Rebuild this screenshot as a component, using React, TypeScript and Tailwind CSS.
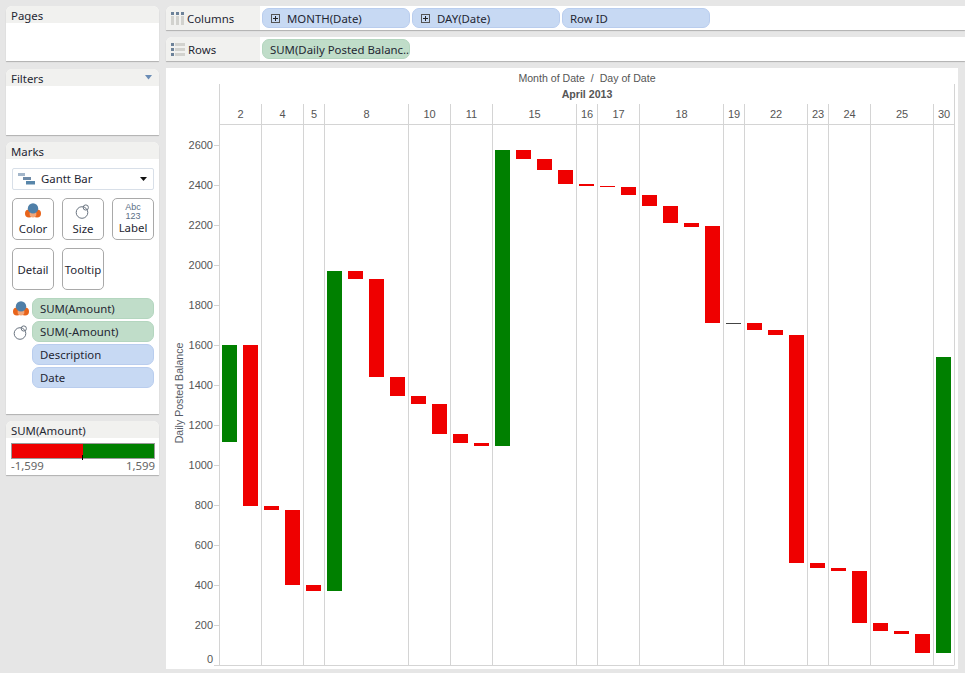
import React from "react";

const days = [
  { label: "2", span: 2 },
  { label: "4", span: 2 },
  { label: "5", span: 1 },
  { label: "8", span: 4 },
  { label: "10", span: 2 },
  { label: "11", span: 2 },
  { label: "15", span: 4 },
  { label: "16", span: 1 },
  { label: "17", span: 2 },
  { label: "18", span: 4 },
  { label: "19", span: 1 },
  { label: "22", span: 3 },
  { label: "23", span: 1 },
  { label: "24", span: 2 },
  { label: "25", span: 3 },
  { label: "30", span: 1 },
];

// top and bottom of each gantt bar, in page pixels
const bars: [number, number, string?][] = [
  [345, 442, "g"], [345, 506], [506, 510], [510, 585], [585, 591],
  [271, 591, "g"], [271, 279], [279, 377], [377, 396], [396, 404],
  [404, 434], [434, 443], [443, 446], [150, 446, "g"], [150, 159],
  [159, 170], [170, 184], [184, 186], [186, 187], [187, 195],
  [195, 206], [206, 223], [223, 227], [226, 323], [323, 324, "d"],
  [323, 330], [330, 335], [335, 563], [563, 568], [568, 571],
  [571, 623], [623, 631], [631, 634], [634, 653], [357, 653, "g"],
];

const ticks = [2600, 2400, 2200, 2000, 1800, 1600, 1400, 1200, 1000, 800, 600, 400, 200];

function ColorIcon({ size = 16 }: { size?: number }) {
  return (
    <svg width={size} height={size} viewBox="0 0 16 16">
      <circle cx="4" cy="10.5" r="4" fill="#e8641b" />
      <circle cx="12" cy="10.5" r="4" fill="#e8641b" />
      <circle cx="8" cy="11" r="3.4" fill="#f2a679" />
      <circle cx="8" cy="5.4" r="5.2" fill="#4f7fa8" />
    </svg>
  );
}

function SizeIcon({ size = 16 }: { size?: number }) {
  return (
    <svg width={size} height={size} viewBox="0 0 16 16" fill="none" stroke="#6a7480" strokeWidth="1">
      <circle cx="7" cy="9.5" r="5.8" />
      <circle cx="10.8" cy="4.5" r="2.6" />
    </svg>
  );
}

function ColumnsIcon() {
  return (
    <svg width="13" height="13" viewBox="0 0 13 13" className="shrink-0">
      {[0, 5, 10].map((x) => (
        <g key={x}>
          <rect x={x} y="0" width="3" height="3" fill="#6d8299" />
          <rect x={x} y="4" width="3" height="9" fill="#d2d2ce" />
        </g>
      ))}
    </svg>
  );
}

function RowsIcon() {
  return (
    <svg width="14" height="13" viewBox="0 0 14 13" className="shrink-0">
      {[0, 5, 10].map((y) => (
        <g key={y}>
          <rect x="0" y={y} width="3" height="3" fill="#6d8299" />
          <rect x="4" y={y} width="10" height="3" fill="#d2d2ce" />
        </g>
      ))}
    </svg>
  );
}

function Pill({ text, green, plus }: { text: string; green?: boolean; plus?: boolean }) {
  return (
    <div
      className={`flex h-5 w-[148px] items-center overflow-hidden whitespace-nowrap rounded-[7px] border ${
        green ? "border-[#b4d6bf] bg-[#c0ddc9]" : "border-[#b9cdee] bg-[#c7d9f3]"
      } ${plus ? "pl-2" : "pl-[7px]"}`}
    >
      {plus && (
        <span className="mr-[7px] flex h-[9px] w-[9px] shrink-0 items-center justify-center border border-[#555] text-[0px]">
          <svg width="7" height="7" viewBox="0 0 7 7">
            <path d="M1 3.5H6M3.5 1V6" stroke="#222" strokeWidth="1" />
          </svg>
        </span>
      )}
      <span className="pt-[2px]">{text}</span>
    </div>
  );
}

function Shelf({ icon, title, children }: { icon: React.ReactNode; title: string; children: React.ReactNode }) {
  return (
    <div className="flex h-6 overflow-hidden rounded-tl-md bg-white shadow-[0_1px_1px_#b0b0b0]">
      <div className="flex w-[94px] shrink-0 items-center gap-[3px] bg-[#f1f1ef] pl-[5px]">
        {icon}
        <span className="pt-[2px]">{title}</span>
      </div>
      <div className="flex items-center gap-[2px] pl-[2px]">{children}</div>
    </div>
  );
}

function Card({ title, height, arrow, children }: { title: string; height: string; arrow?: boolean; children?: React.ReactNode }) {
  return (
    <div className={`${height} overflow-hidden rounded-t-md bg-white shadow-[0_1px_1px_#b0b0b0]`}>
      <div className="flex h-[17px] items-center justify-between bg-[#f1f1ef] pl-[5px] pr-[7px]">
        <span className="pt-[2px]">{title}</span>
        {arrow && (
          <svg width="7" height="5" viewBox="0 0 7 5">
            <path d="M0 0H7L3.5 4.5Z" fill="#6a8cb5" />
          </svg>
        )}
      </div>
      {children}
    </div>
  );
}

function MarkButton({ label, icon }: { label: string; icon?: React.ReactNode }) {
  return (
    <div className="flex h-[42px] w-[42px] flex-col items-center justify-center rounded-[5px] border border-[#a9a9a9] bg-white">
      {icon && <div className="flex h-4 items-center justify-center">{icon}</div>}
      <span className={`leading-[15px] ${icon ? "pt-[2px]" : ""}`}>{label}</span>
    </div>
  );
}

function ShelfField({ icon, text, green }: { icon?: React.ReactNode; text: string; green?: boolean }) {
  return (
    <div className="flex items-center">
      <div className="flex w-5 shrink-0 justify-start pl-[1px]">{icon}</div>
      <div
        className={`flex h-[21px] w-[122px] items-center rounded-[7px] border pl-[7px] ${
          green ? "border-[#b4d6bf] bg-[#c0ddc9]" : "border-[#b9cdee] bg-[#c7d9f3]"
        }`}
      >
        <span>{text}</span>
      </div>
    </div>
  );
}

export default function App() {
  return (
    <div className="flex h-[673px] w-[965px] overflow-hidden bg-[#e6e6e6] pl-[6px] pt-[6px] font-['Noto_Sans',sans-serif] text-[11.4px] leading-none text-[#1f2733]">
      <div className="flex w-[153px] shrink-0 flex-col gap-[7px]">
        <Card title="Pages" height="h-[55px]" />
        <Card title="Filters" height="mt-px h-[66px]" arrow />

        <Card title="Marks" height="h-[272px]">
          <div className="pl-[6px] pr-[5px] pt-[9px]">
            <div className="flex h-[22px] items-center rounded-[2px] border border-[#d8dfe8] pl-[5px] pr-[6px]">
              <svg width="17" height="12" viewBox="0 0 17 12" className="shrink-0">
                <rect x="0" y="0" width="7" height="3" fill="#a3b6ca" />
                <rect x="5" y="4" width="8" height="3" fill="#6f8ba8" />
                <rect x="8" y="8" width="9" height="3.5" fill="#5886aa" />
              </svg>
              <span className="ml-[6px] flex-1">Gantt Bar</span>
              <svg width="7" height="4" viewBox="0 0 7 4">
                <path d="M0 0H7L3.5 4Z" fill="#111" />
              </svg>
            </div>

            <div className="mt-2 flex gap-2">
              <MarkButton label="Color" icon={<ColorIcon />} />
              <MarkButton label="Size" icon={<SizeIcon />} />
              <div className="flex h-[42px] w-[42px] flex-col items-center justify-center rounded-[5px] border border-[#a9a9a9] bg-white">
                <div className="flex flex-col items-center font-['Liberation_Sans',sans-serif] text-[9px] leading-[9px] text-[#5b6f86]">
                  <span>Abc</span>
                  <span>123</span>
                </div>
                <span className="leading-[14px]">Label</span>
              </div>
            </div>
            <div className="mt-2 flex gap-2">
              <MarkButton label="Detail" />
              <MarkButton label="Tooltip" />
            </div>

            <div className="mt-2 flex flex-col gap-[2px]">
              <ShelfField icon={<ColorIcon />} text="SUM(Amount)" green />
              <ShelfField icon={<SizeIcon />} text="SUM(-Amount)" green />
              <ShelfField text="Description" />
              <ShelfField text="Date" />
            </div>
          </div>
        </Card>

        <Card title="SUM(Amount)" height="h-[54px]">
          <div className="px-[5px] pt-[5px]">
            <div className="relative flex h-[16px] w-[144px] border border-[#9a9a9a]">
              <div className="w-1/2 bg-[#ef0000]" />
              <div className="w-1/2 bg-[#008000]" />
              <div className="absolute bottom-[-2px] left-[70px] h-[5px] w-px bg-black" />
            </div>
            <div className="mt-px flex w-[144px] justify-between text-[#666]">
              <span>-1,599</span>
              <span>1,599</span>
            </div>
          </div>
        </Card>
      </div>

      <div className="ml-[7px] flex min-w-0 flex-1 flex-col gap-[7px]">
        <Shelf icon={<ColumnsIcon />} title="Columns">
          <Pill text="MONTH(Date)" plus />
          <Pill text="DAY(Date)" plus />
          <Pill text="Row ID" />
        </Shelf>
        <Shelf icon={<RowsIcon />} title="Rows">
          <Pill text="SUM(Daily Posted Balanc.." green />
        </Shelf>

        <div className="mr-[7px] h-[601px] bg-white pt-1 font-['Liberation_Sans',sans-serif] text-[#555]">
          <div className="ml-[53px] w-[736px]">
            <div className="flex h-3 items-center justify-center text-[10.6px]">Month of Date&nbsp; /&nbsp; Day of Date</div>
            <div className="flex h-5 items-center justify-center border-x border-[#d4d4d4] text-[10.6px] font-bold">April 2013</div>
            <div className="flex h-[21px] border-b border-[#d4d4d4] text-[11px]">
              {days.map((d, i) => (
                <div
                  key={d.label}
                  className={`flex items-center justify-center border-l border-[#d4d4d4] ${i === days.length - 1 ? "border-r" : ""}`}
                  style={{ width: d.span * 21 + (i === days.length - 1 ? 1 : 0) }}
                >
                  {d.label}
                </div>
              ))}
            </div>
          </div>

          <svg width="792" height="544" viewBox="166 125 792 544" className="block">
            <line x1="214" x2="954.5" y1="665.5" y2="665.5" stroke="#d4d4d4" />
            {[219, 261, 303, 324, 408, 450, 492, 576, 597, 639, 723, 744, 807, 828, 870, 933, 954].map((x) => (
              <line key={x} x1={x + 0.5} x2={x + 0.5} y1="125" y2="665" stroke="#d4d4d4" />
            ))}
            {ticks.map((t) => {
              const y = 665 - t / 5;
              return (
                <g key={t}>
                  <line x1="214" x2="219" y1={y + 0.5} y2={y + 0.5} stroke="#d4d4d4" />
                  <text x="213" y={y + 4} textAnchor="end" fontSize="11" fill="#555">
                    {t}
                  </text>
                </g>
              );
            })}
            <text x="213" y="663" textAnchor="end" fontSize="11" fill="#555">
              0
            </text>
            <text
              transform="translate(183 393) rotate(-90)"
              textAnchor="middle"
              fontSize="10.6"
              fill="#555b66"
            >
              Daily Posted Balance
            </text>
            {bars.map(([top, bottom, kind], i) => (
              <rect
                key={i}
                x={222 + i * 21}
                y={top}
                width="15"
                height={bottom - top}
                fill={kind === "g" ? "#008000" : kind === "d" ? "#444" : "#ef0000"}
              />
            ))}
          </svg>
        </div>
      </div>
    </div>
  );
}
